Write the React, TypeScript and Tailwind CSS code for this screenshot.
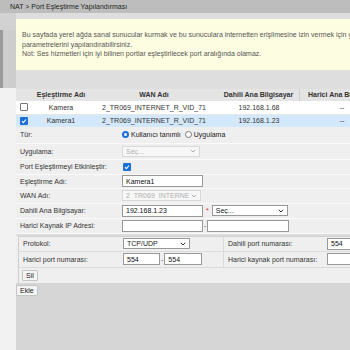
import React from "react";

const font = "font-['Liberation_Sans',Arial,sans-serif]";

function Box({ checked }: { checked?: boolean }) {
  return checked ? (
    <span className="inline-flex h-[8px] w-[8px] items-center justify-center rounded-[1px] bg-[#1a6fd8]">
      <svg width="6" height="6" viewBox="0 0 6 6">
        <path d="M1 3.2 L2.4 4.6 L5 1.5" stroke="white" strokeWidth="1.1" fill="none" />
      </svg>
    </span>
  ) : (
    <span className="inline-block h-[8px] w-[8px] rounded-[1px] border border-[#777] bg-white" />
  );
}

function Radio({ checked }: { checked?: boolean }) {
  return checked ? (
    <span className="inline-flex h-[7px] w-[7px] items-center justify-center rounded-full bg-[#1a6fd8]">
      <span className="h-[3px] w-[3px] rounded-full bg-white" />
    </span>
  ) : (
    <span className="inline-block h-[7px] w-[7px] rounded-full border border-[#777] bg-white" />
  );
}

function Chevron({ color = "#333" }: { color?: string }) {
  return (
    <svg width="6" height="4" viewBox="0 0 6 4" className="shrink-0">
      <path d="M0.8 0.8 L3 3 L5.2 0.8" stroke={color} strokeWidth="1" fill="none" />
    </svg>
  );
}

function Select({ text, w, disabled }: { text: string; w: string; disabled?: boolean }) {
  return (
    <div
      className={`flex h-[11px] items-center justify-between gap-[2px] border px-[3px] ${w} ${
        disabled ? "border-[#d8d8d8] bg-[#f7f7f7] text-[#b0b0b0]" : "border-[#999] bg-white text-[#222]"
      }`}
    >
      <span className="overflow-hidden whitespace-nowrap">{text}</span>
      <Chevron color={disabled ? "#aaa" : "#333"} />
    </div>
  );
}

function Input({ text = "", w }: { text?: string; w: string }) {
  return (
    <div className={`flex h-[12px] items-center border border-[#999] bg-white px-[3px] text-[#111] ${w}`}>
      {text}
    </div>
  );
}

function FormRow({ label, h, children }: { label: string; h: string; children?: React.ReactNode }) {
  return (
    <div className={`flex ${h} items-center border-b border-[#fafafa]`}>
      <div className="w-[106px] pl-[4px] text-[#333]">{label}</div>
      <div className="flex items-center">{children}</div>
    </div>
  );
}

export default function App() {
  return (
    <div className={`${font} h-[350px] w-[350px] overflow-hidden bg-[#d6d6d6] text-[7px] leading-none`}>
      {/* title bar */}
      <div className="flex h-[13px] items-center bg-[#bdbdbd] pl-[10px] text-[#1e1e1e]">
        NAT &gt; Port Eşleştirme Yapılandırması
      </div>

      <div className="flex">
        {/* left sidebar strip */}
        <div className="flex w-[16px] shrink-0 flex-col">
          <div className="h-[17px] bg-[#d2d2d2]" />
          <div className="h-[58px] border-l-[3px] border-[#9a9a9a] bg-[#cdcdcd]" />
          <div className="h-[262px] bg-[#f2f2f2]" />
        </div>

        {/* main */}
        <div className="w-[420px] shrink-0">
          <div className="bg-[#dedede] pt-[6px] pb-[19px]">
            <div className="bg-[#fdfde2] pt-[11px] pb-[11px] pl-[6px] leading-[9.5px] text-[#555] whitespace-nowrap">
              <div>
                Bu sayfada yerel ağda sanal sunucular kurmak ve bu sunuculara internetten erişilmesine izin vermek için gerekli
              </div>
              <div>parametrelerini yapılandırabilirsiniz.</div>
              <div>Not: Ses hizmetleri için iyi bilinen portlar eşleştirilecek port aralığında olamaz.</div>
            </div>
          </div>

          {/* table */}
          <div className="bg-[#efefef]">
            <div className="flex h-[12px] items-center bg-[#e4e4e4] font-bold text-[#333]">
              <div className="w-[16px]" />
              <div className="w-[58px] text-center">Eşleştirme Adı</div>
              <div className="w-[128px] text-center">WAN Adı</div>
              <div className="w-[82px] border-r border-[#cfcfcf] text-center leading-[12px]">Dahili Ana Bilgisayar</div>
              <div className="pl-[8px]">Harici Ana Bilgisayar</div>
            </div>
            <div className="flex h-[14px] items-center border-b border-[#e6e6e6] bg-white text-[#333]">
              <div className="flex w-[16px] justify-center">
                <Box />
              </div>
              <div className="w-[58px] text-center">Kamera</div>
              <div className="w-[128px] text-center">2_TR069_INTERNET_R_VID_71</div>
              <div className="w-[82px] text-center">192.168.1.68</div>
              <div className="w-[84px] text-center">--</div>
            </div>
            <div className="flex h-[12px] items-center bg-[#d3e8fa] text-[#333]">
              <div className="flex w-[16px] justify-center">
                <Box checked />
              </div>
              <div className="w-[58px] text-center">Kamera1</div>
              <div className="w-[128px] text-center">2_TR069_INTERNET_R_VID_71</div>
              <div className="w-[82px] text-center">192.168.1.23</div>
              <div className="w-[84px] text-center">--</div>
            </div>

            {/* form */}
            <FormRow label="Tür:" h="h-[17px]">
              <Radio checked />
              <span className="ml-[2px] text-[#222]">Kullanıcı tanımlı</span>
              <span className="ml-[4px]">
                <Radio />
              </span>
              <span className="ml-[2px] text-[#222]">Uygulama</span>
            </FormRow>
            <FormRow label="Uygulama:" h="h-[16px]">
              <Select text="Seç..." w="w-[78px]" disabled />
            </FormRow>
            <FormRow label="Port Eşleştirmeyi Etkinleştir:" h="h-[15px]">
              <span className="ml-[1px]">
                <Box checked />
              </span>
            </FormRow>
            <FormRow label="Eşleştirme Adı:" h="h-[14px]">
              <Input text="Kamera1" w="w-[81px]" />
            </FormRow>
            <FormRow label="WAN Adı:" h="h-[15px]">
              <Select text="2_TR069_INTERNET_R_VID_71" w="w-[79px]" disabled />
            </FormRow>
            <FormRow label="Dahili Ana Bilgisayar:" h="h-[15px]">
              <Input text="192.168.1.23" w="w-[81px]" />
              <span className="mx-[3px] text-[#d33]">*</span>
              <Select text="Seç..." w="w-[76px]" />
            </FormRow>
            <FormRow label="Harici Kaynak IP Adresi:" h="h-[15px]">
              <Input w="w-[81px]" />
              <span className="mx-[1px] text-[#555]">-</span>
              <Input w="w-[82px]" />
            </FormRow>

            <div className="h-[2px] bg-[#dcdcdc]" />

            {/* port section */}
            <div className="ml-[2px] border-l border-t border-[#d0d0d0] bg-[#efefef]">
              <div className="flex h-[15px] items-center border-b border-[#dadada]">
                <div className="w-[104px] pl-[4px] text-[#333]">Protokol:</div>
                <div className="w-[100px]">
                  <Select text="TCP/UDP" w="w-[67px]" />
                </div>
                <div className="flex h-full w-[104px] items-center border-l border-[#dadada] pl-[4px] text-[#333]">
                  Dahili port numarası:
                </div>
                <Input text="554" w="w-[40px]" />
              </div>
              <div className="flex h-[16px] items-center border-b border-[#dadada]">
                <div className="w-[104px] pl-[4px] text-[#333]">Harici port numarası:</div>
                <div className="flex w-[100px] items-center">
                  <Input text="554" w="w-[37px]" />
                  <span className="mx-[1px] text-[#555]">-</span>
                  <Input text="554" w="w-[38px]" />
                </div>
                <div className="flex h-full w-[104px] items-center border-l border-[#dadada] pl-[4px] text-[#333]">
                  Harici kaynak port numarası:
                </div>
                <Input w="w-[40px]" />
              </div>
              <div className="flex h-[15px] items-center pl-[3px]">
                <button className="h-[11px] rounded-[1px] border border-[#c4c4c4] bg-[#f4f4f4] px-[3px] text-[#222]">
                  Sil
                </button>
              </div>
            </div>
          </div>

          <div className="pt-[2px]">
            <button className="h-[11px] rounded-[1px] border border-[#c4c4c4] bg-[#f4f4f4] px-[3px] text-[#222]">
              Ekle
            </button>
          </div>
        </div>
      </div>
    </div>
  );
}
